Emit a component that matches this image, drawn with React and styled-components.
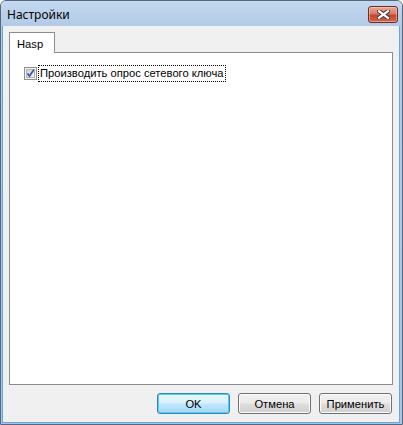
import React from "react";
import styled, { createGlobalStyle } from "styled-components";

const Global = createGlobalStyle`
  html, body { margin: 0; padding: 0; background: #ffffff; }
  body { font-family: "Liberation Sans", Arial, sans-serif; }
  * { box-sizing: border-box; }
`;

const Frame = styled.div`
  width: 403px;
  height: 425px;
  display: flex;
  flex-direction: column;
  border: 1px solid #55687d;
  border-radius: 6px 6px 0 0;
  background: linear-gradient(to bottom, #bcd2ec 0px, #b3cbe7 26px, #a9c4e4 100%);
  overflow: hidden;
`;

const TitleBar = styled.div`
  height: 25px;
  flex: none;
  display: flex;
  align-items: flex-start;
  justify-content: space-between;
  padding: 0 4px 0 6px;
  background: linear-gradient(to bottom, #c4d8ef 0%, #bbd1eb 50%, #b2cae7 100%);
`;

const Title = styled.div`
  font-family: "Noto Sans", "Open Sans", sans-serif;
  font-size: 12px;
  line-height: 14px;
  color: #000;
  margin-top: 7px;
`;

const CloseButton = styled.div`
  width: 30px;
  height: 17px;
  margin-top: 5px;
  border: 1px solid #6b2b22;
  border-radius: 3px;
  background: linear-gradient(to bottom, #e9a99b 0%, #d87a66 45%, #c4472f 55%, #cf6249 100%);
  box-shadow: inset 0 0 0 1px rgba(255, 210, 200, 0.55);
  display: flex;
  align-items: center;
  justify-content: center;
`;

const Body = styled.div`
  flex: 1;
  display: flex;
  flex-direction: column;
  margin: 0 2px 1px 1px;
  border-left: 1px solid #5ea9e0;
  border-right: 1px solid #5ea9e0;
  border-bottom: 1px solid #5ea9e0;
  background: #f0f0f0;
  padding: 6px 6px 8px 6px;
`;

const TabStrip = styled.div`
  display: flex;
  height: 20px;
  flex: none;
`;

const Tab = styled.div`
  width: 46px;
  height: 21px;
  border: 1px solid #898c95;
  border-bottom: none;
  background: #ffffff;
  position: relative;
  z-index: 1;
  font-size: 11.2px;
  color: #000;
  display: flex;
  align-items: center;
  padding-left: 7px;
  padding-top: 1px;
`;

const Panel = styled.div`
  flex: 1;
  border: 1px solid #898c95;
  background: #ffffff;
  padding: 12px 14px;
`;

const CheckRow = styled.label`
  display: flex;
  align-items: center;
  gap: 1px;
  font-size: 11.2px;
  color: #000;
`;

const CheckText = styled.span`
  border: 1px dotted #000;
  padding: 1px;
  line-height: 13px;
`;

const Buttons = styled.div`
  flex: none;
  display: flex;
  justify-content: flex-end;
  gap: 8px;
  margin-top: 8px;
  padding-right: 1px;
`;

const Button = styled.div`
  width: 73px;
  height: 21px;
  border-radius: 3px;
  border: 1px solid ${(p) => (p.$default ? "#3c7fb1" : "#707070")};
  background: ${(p) =>
    p.$default
      ? "linear-gradient(to bottom, #eaf6fd 0%, #d9f0fc 45%, #bee6fd 55%, #a7d9f5 100%)"
      : "linear-gradient(to bottom, #f2f2f2 0%, #ebebeb 45%, #dddddd 55%, #cfcfcf 100%)"};
  box-shadow: inset 0 0 0 1px ${(p) => (p.$default ? "#48d3f9" : "#fcfcfc")};
  font-size: 11.2px;
  color: #000;
  display: flex;
  align-items: center;
  justify-content: center;
`;

function CloseGlyph() {
  return (
    <svg width="13" height="9" viewBox="0 0 13 9">
      <path d="M2 1.2 L11 7.8 M11 1.2 L2 7.8" stroke="#45373a" strokeWidth="4.2" strokeLinecap="square" />
      <path d="M2 1.2 L11 7.8 M11 1.2 L2 7.8" stroke="#ffffff" strokeWidth="2.2" strokeLinecap="square" />
    </svg>
  );
}

function CheckBox() {
  return (
    <svg width="13" height="13" viewBox="0 0 13 13">
      <defs>
        <linearGradient id="cbg" x1="0" y1="0" x2="1" y2="1">
          <stop offset="0" stopColor="#cbcfd5" />
          <stop offset="1" stopColor="#f6f6f6" />
        </linearGradient>
      </defs>
      <rect x="0.5" y="0.5" width="12" height="12" fill="#f4f4f4" stroke="#8e8f8f" />
      <rect x="2.5" y="2.5" width="8" height="8" fill="url(#cbg)" stroke="#aeb3b9" />
      <path d="M3.5 6.5 L5.5 9 L9.8 2.8" stroke="#3e5a9a" strokeWidth="1.7" fill="none" />
    </svg>
  );
}

export default function App() {
  return (
    <>
      <Global />
      <Frame>
        <TitleBar>
          <Title>Настройки</Title>
          <CloseButton>
            <CloseGlyph />
          </CloseButton>
        </TitleBar>
        <Body>
          <TabStrip>
            <Tab>Hasp</Tab>
          </TabStrip>
          <Panel>
            <CheckRow>
              <CheckBox />
              <CheckText>Производить опрос сетевого ключа</CheckText>
            </CheckRow>
          </Panel>
          <Buttons>
            <Button $default>OK</Button>
            <Button>Отмена</Button>
            <Button>Применить</Button>
          </Buttons>
        </Body>
      </Frame>
    </>
  );
}
